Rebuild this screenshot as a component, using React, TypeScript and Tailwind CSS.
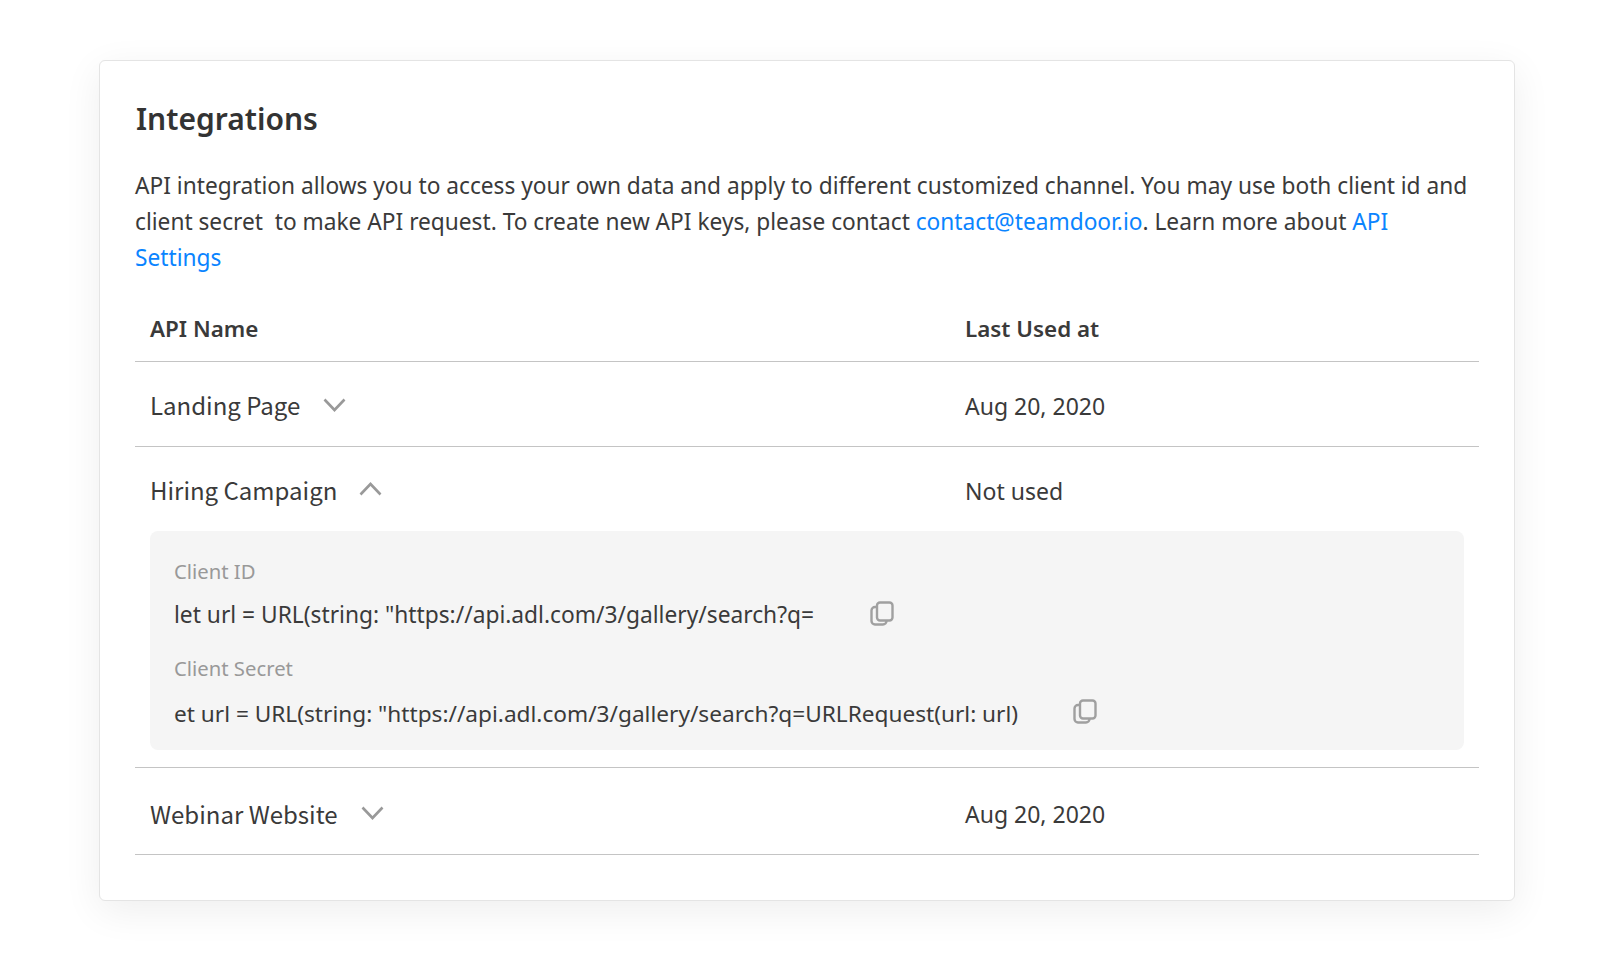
import React from 'react';

const font = { fontFamily: '"Noto Sans", sans-serif' };
const nameFont = { fontFamily: '"Noto Sans CJK SC", "Noto Sans", sans-serif' };

const CopyIcon = () => (
  <svg width="24" height="25" viewBox="0 0 24 25" fill="none" stroke="#a0a0a0" strokeWidth="2.4">
    <rect x="7" y="1.5" width="15.5" height="18" rx="3" />
    <path d="M7 6H5a3.5 3.5 0 0 0-3.5 3.5V20A3.5 3.5 0 0 0 5 23.5h8a3.5 3.5 0 0 0 3.5-3.5" />
  </svg>
);

const Chevron = ({ up }: { up?: boolean }) => (
  <svg className={up ? 'ml-[22px] -mt-[2px]' : 'ml-[23px] -mt-[1px]'} width="23" height="14" viewBox="0 0 23 14" fill="none" stroke="#999" strokeWidth="2.6">
    <path d={up ? 'M1.5 12.5 11.5 2l10 10.5' : 'M1.5 1.5 11.5 12l10-10.5'} />
  </svg>
);

const Row = ({ name, date, open, className = 'h-[84px] pt-[2px]' }: { name: string; date: string; open?: boolean; className?: string }) => (
  <div className={`flex items-center pl-[15px] ${className}`}>
    <div className="w-[815px] flex items-center text-[24px] text-[#3a3a3a]" style={nameFont}>
      <span>{name}</span>
      <Chevron up={open} />
    </div>
    <span className="mt-[2px] text-[23px] text-[#3a3a3a]">{date}</span>
  </div>
);

export default function App() {
  return (
    <div className="w-[1620px] h-[960px] bg-white pt-[60px] pl-[99px]" style={font}>
      <div className="w-[1416px] h-[841px] rounded-md border border-[#e4e4e4] bg-white shadow-[0_10px_38px_rgba(0,0,0,0.07)] pl-[35px] pr-[35px] pt-[36px]">
        <h1 className="text-[30px] font-semibold text-[#333] leading-[44px] ml-px">Integrations</h1>
        <p className="mt-[27px] text-[22.7px] leading-[36px] text-[#3a3a3a]">
          API integration allows you to access your own data and apply to different customized channel. You may use both client id and client secret&nbsp; to make API request. To create new API keys, please contact{' '}
          <span className="text-[#0a84ff]">contact@teamdoor.io</span>. Learn more about{' '}
          <span className="text-[#0a84ff]">API Settings</span>
        </p>
        <div className="mt-[19px] flex items-center h-[67px] pt-[2px] pl-[15px] border-b-[1.5px] border-[#c4c4c4] text-[22.4px] font-semibold text-[#3a3a3a]">
          <div className="w-[815px]">API Name</div>
          <div>Last Used at</div>
        </div>
        <div className="border-b-[1.5px] border-[#c4c4c4]">
          <Row name="Landing Page" date="Aug 20, 2020" />
        </div>
        <div className="border-b-[1.5px] border-[#c4c4c4] pb-[17px]">
          <Row name="Hiring Campaign" date="Not used" open />
          <div className="mx-[15px] h-[219px] rounded-lg bg-[#f5f5f5] px-[24px] pt-[24px]">
            <div className="text-[20.3px] text-[#999] leading-[32px]">Client ID</div>
            <div className="mt-[10px] flex items-center text-[22.76px] text-[#3a3a3a] leading-[36px]">
              <span>let url = URL(string: "https://api.adl.com/3/gallery/search?q=</span>
              <span className="ml-[56px] -mt-[4px]"><CopyIcon /></span>
            </div>
            <div className="mt-[19px] text-[20.3px] text-[#999] leading-[32px]">Client Secret</div>
            <div className="mt-[12px] flex items-center text-[22.65px] text-[#3a3a3a] leading-[36px]">
              <span>et url = URL(string: "https://api.adl.com/3/gallery/search?q=URLRequest(url: url)</span>
              <span className="ml-[55px] -mt-[6px]"><CopyIcon /></span>
            </div>
          </div>
        </div>
        <div className="border-b-[1.5px] border-[#c4c4c4]">
          <Row name="Webinar Website" date="Aug 20, 2020" className="h-[86px] pt-[5px]" />
        </div>
      </div>
    </div>
  );
}
